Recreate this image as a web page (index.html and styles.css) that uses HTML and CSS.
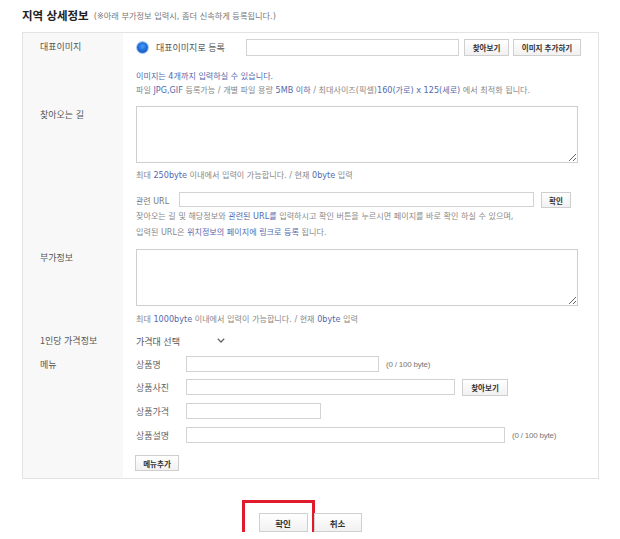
FILE: index.html
```html
<!DOCTYPE html>
<html lang="ko">
<head>
<meta charset="utf-8">
<title>지역 상세정보</title>
<link rel="stylesheet" href="styles.css">
</head>
<body>
<div class="page">
  <h2 class="title">지역 상세정보<span class="sub">(※아래 부가정보 입력시, 좀더 신속하게 등록됩니다.)</span></h2>

  <div class="box">
    <div class="lbl">대표이미지</div>
    <div class="cnt row-a">
      <div class="line1">
        <label class="radio"><span class="dot"></span>대표이미지로 등록</label>
        <input class="inp img-inp" type="text">
        <button class="btn b-find">찾아보기</button>
        <button class="btn b-add">이미지 추가하기</button>
      </div>
      <p class="note blue gap13">이미지는 4개까지 입력하실 수 있습니다.</p>
      <p class="note">파일 <span class="blue">JPG,GIF</span> 등록가능 / 개별 파일 용량 <span class="blue">5MB 이하</span> / 최대사이즈(픽셀)<span class="blue">160(가로) x 125(세로)</span> 에서 최적화 됩니다.</p>
    </div>

    <div class="lbl">찾아오는 길</div>
    <div class="cnt row-b">
      <textarea class="ta"></textarea>
      <p class="note gap5">최대 <span class="blue">250byte</span> 이내에서 입력이 가능합니다. / 현재 <span class="blue">0byte</span> 입력</p>
      <div class="url-line">
        <span class="url-lbl">관련 URL</span>
        <input class="inp url-inp" type="text">
        <button class="btn b-ok">확인</button>
      </div>
      <p class="note tall">찾아오는 길 및 해당정보와 <span class="blue">관련된 URL를</span> 입력하시고 확인 버튼을 누르시면 페이지를 바로 확인 하실 수 있으며,</p>
      <p class="note tall">입력된 URL은 <span class="blue">위치정보의 페이지에 링크로 등록</span> 됩니다.</p>
    </div>

    <div class="lbl">부가정보</div>
    <div class="cnt row-c">
      <textarea class="ta"></textarea>
      <p class="note gap6">최대 <span class="blue">1000byte</span> 이내에서 입력이 가능합니다. / 현재 <span class="blue">0byte</span> 입력</p>
    </div>

    <div class="lbl">1인당 가격정보</div>
    <div class="cnt row-d">
      <div class="select">
        <span class="sel-text">가격대 선택</span>
        <svg class="chev" width="8" height="5" viewBox="0 0 8 5"><path d="M0.8 0.8 L4 4 L7.2 0.8" fill="none" stroke="#666" stroke-width="1.3"/></svg>
      </div>
    </div>

    <div class="lbl">메뉴</div>
    <div class="cnt row-e">
      <div class="item">
        <span class="item-lbl">상품명</span>
        <input class="inp w-name" type="text">
        <span class="count">(0 / 100 byte)</span>
      </div>
      <div class="item gap7">
        <span class="item-lbl">상품사진</span>
        <input class="inp w-photo" type="text">
        <button class="btn b-find2">찾아보기</button>
      </div>
      <div class="item gap8">
        <span class="item-lbl">상품가격</span>
        <input class="inp w-price" type="text">
      </div>
      <div class="item gap8">
        <span class="item-lbl">상품설명</span>
        <input class="inp w-desc" type="text">
        <span class="count">(0 / 100 byte)</span>
      </div>
      <div class="item gap12">
        <button class="btn b-menu">메뉴추가</button>
      </div>
    </div>
  </div>

  <div class="actions">
    <div class="hl"><button class="btn big b-confirm">확인</button></div>
    <button class="btn big b-cancel">취소</button>
  </div>
</div>
</body>
</html>
```

FILE: styles.css
```css
* { box-sizing: border-box; }

body {
  margin: 0;
  background: #fff;
  font-family: "Noto Sans CJK KR", "Noto Sans", sans-serif;
  color: #555;
}

.page {
  width: 620px;
  padding: 7px 0 0 22px;
}

.title {
  margin: 0 0 9px 0;
  height: 16px;
  line-height: 16px;
  font-size: 11.5px;
  font-weight: bold;
  color: #222;
  white-space: nowrap;
}

.sub {
  margin-left: 5px;
  font-family: "DejaVu Sans", "Noto Sans CJK KR", sans-serif;
  font-size: 8.2px;
  font-weight: normal;
  color: #777;
  vertical-align: 1px;
}

.box {
  width: 577px;
  border: 1px solid #e3e3e3;
  display: grid;
  grid-template-columns: 100px 1fr;
}

.lbl {
  background: #f8f8f8;
  padding: 5px 0 0 17px;
  font-size: 9px;
  line-height: 18px;
  color: #555;
  white-space: nowrap;
}

.cnt {
  background: #fff;
  padding-left: 13px;
}

.row-a { padding-top: 5px; padding-bottom: 4px; }
.row-b { padding-top: 5px; padding-bottom: 4px; }
.row-c { padding-top: 5px; padding-bottom: 1px; }
.row-d { padding-top: 5px; padding-bottom: 1px; }
.row-e { padding-top: 5px; padding-bottom: 7px; }

.line1 {
  display: flex;
  align-items: center;
  height: 18px;
}

.radio {
  width: 110px;
  display: flex;
  align-items: center;
  font-size: 9px;
  color: #555;
  white-space: nowrap;
}

.dot {
  width: 11px;
  height: 11px;
  margin: 0 8px 0 1px;
  border-radius: 50%;
  background: radial-gradient(circle at 50% 40%, #4d9cf5 0, #1f6fdc 4px, #1b62c9 5.5px);
  box-shadow: 0 0 0 1px #a9c8f0;
  flex: none;
}

.inp {
  display: block;
  height: 16px;
  margin: 0;
  padding: 0 3px;
  border: 1px solid #d3d3d3;
  background: #fff;
  font-size: 8px;
  flex: none;
}

.img-inp { width: 213px; height: 17px; margin-right: 5px; }

.btn {
  display: block;
  margin: 0;
  padding: 0;
  height: 17px;
  border: 1px solid #cfcfcf;
  background: linear-gradient(#ffffff, #f1f1f1);
  font-family: "Noto Sans CJK KR", "Noto Sans", sans-serif;
  font-size: 7.5px;
  font-weight: bold;
  color: #333;
  white-space: nowrap;
  flex: none;
}

.b-find { width: 45px; }
.b-add { width: 68px; margin-left: 4px; }

.note {
  margin: 0;
  font-family: "DejaVu Sans", "Noto Sans CJK KR", sans-serif;
  font-size: 8.1px;
  line-height: 14px;
  color: #888;
  white-space: nowrap;
}

.note.tall { line-height: 16px; }

.blue { color: #5369ad; }

.gap5 { margin-top: 5px; }
.gap6 { margin-top: 6px; }
.gap7 { margin-top: 7px; }
.gap8 { margin-top: 8px; }
.gap12 { margin-top: 12px; }
.gap13 { margin-top: 13px; }

.ta {
  display: block;
  width: 442px;
  height: 57px;
  margin: 0;
  border: 1px solid #cfcfcf;
  resize: both;
  font-size: 8px;
}

.url-line {
  margin-top: 10px;
  height: 16px;
  display: flex;
  align-items: center;
}

.url-lbl {
  width: 43px;
  font-family: "DejaVu Sans", "Noto Sans CJK KR", sans-serif;
  font-size: 8px;
  color: #777;
  white-space: nowrap;
}

.url-inp { width: 355px; height: 15px; align-self: flex-start; }

.b-ok { width: 30px; height: 16px; margin-left: 7px; }

.select {
  height: 18px;
  display: flex;
  align-items: center;
}

.sel-text {
  width: 81px;
  font-size: 9px;
  color: #555;
  white-space: nowrap;
}

.chev { display: block; margin-top: -2px; }

.item {
  height: 16px;
  display: flex;
  align-items: center;
}

.item-lbl {
  width: 50px;
  font-size: 9px;
  color: #666;
  white-space: nowrap;
}

.w-name { width: 193px; }
.w-photo { width: 269px; }
.w-price { width: 135px; }
.w-desc { width: 319px; }

.count {
  margin-left: 7px;
  font-family: "Liberation Sans", sans-serif;
  font-size: 8px;
  letter-spacing: -0.2px;
  color: #777;
  white-space: nowrap;
}

.b-find2 { width: 46px; margin-left: 7px; }

.b-menu { width: 44px; height: 16px; margin-left: -1px; }

.actions {
  margin-top: 34px;
  margin-left: -22px;
  display: flex;
  justify-content: center;
  align-items: flex-start;
  gap: 6px;
}

.btn.big {
  height: 19px;
  font-size: 8.5px;
  color: #333;
  border-color: #d0d0d0;
}

.b-confirm { width: 49px; }
.b-cancel { width: 48px; }

/* red highlight frame around the confirm button (annotation); negative margins keep layout size equal to the button */
.hl {
  border: 3px solid #e01b2b;
  padding: 10px 4px 1px 14px;
  margin: -13px -7px -4px -17px;
}
```
